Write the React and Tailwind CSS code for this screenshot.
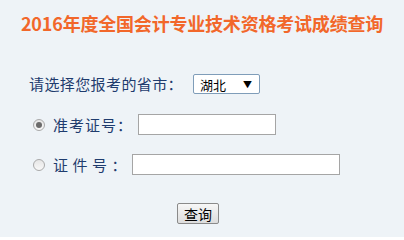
import { useState } from "react"

const Radio = ({ checked }) => (
  <span className="w-[12px] h-[12px] rounded-full border border-[#a9a9a9] bg-gradient-to-b from-[#e6e6e6] to-[#f8f8f8] flex items-center justify-center shrink-0">
    {checked && <span className="w-[6px] h-[6px] rounded-full bg-[#6b6b6b]" />}
  </span>
)

const App = () => {
  const [mode, setMode] = useState("zkz")

  return (
    <div
      className="w-[404px] h-[237px] bg-[#eef3f7] overflow-hidden flex flex-col"
      style={{ fontFamily: '"Noto Sans CJK SC", "Noto Sans", sans-serif' }}
    >
      <h1 className="pt-[13px] h-[33px] text-center text-[18px] leading-[20px] font-bold text-[#f2672a] tracking-[-0.2px] whitespace-nowrap">
        2016年度全国会计专业技术资格考试成绩查询
      </h1>

      {/* province */}
      <div className="mt-[41px] pl-[29px] flex items-center h-[20px]">
        <span className="w-[164px] text-[15px] leading-[20px] text-[#1f3c6e] tracking-[0.4px] whitespace-nowrap">
          请选择您报考的省市：
        </span>
        <div className="w-[67px] h-[20px] border border-[#7f9db9] rounded-[2px] bg-white flex items-center justify-between pl-[6px] pr-[7px]">
          <span className="text-[13px] leading-none text-black">湖北</span>
          <span className="text-[9px] leading-none text-black">▼</span>
        </div>
      </div>

      {/* zkz */}
      <div className="mt-[20px] pl-[33px] flex items-center h-[21px]" onClick={() => setMode("zkz")}>
        <Radio checked={mode === "zkz"} />
        <span className="ml-[8px] w-[85px] text-[15px] leading-[21px] text-[#1f3c6e] tracking-[1px] whitespace-nowrap">准考证号：</span>
        <input className="w-[138px] h-[21px] border border-[#a5a5a5] bg-white outline-none px-1 text-[13px]" />
      </div>

      {/* id */}
      <div className="mt-[19px] pl-[33px] flex items-center h-[21px]" onClick={() => setMode("id")}>
        <Radio checked={mode === "id"} />
        <span className="ml-[8px] w-[79px] shrink-0 text-[15px] leading-[21px] text-[#1f3c6e] tracking-[4.5px] whitespace-nowrap">证件号：</span>
        <input className="w-[208px] h-[21px] border border-[#a5a5a5] bg-white outline-none px-1 text-[13px]" />
      </div>

      <div className="mt-[28px] flex pl-[177px]">
        <button className="w-[42px] h-[21px] border border-[#8a8a8a] rounded-[2px] bg-gradient-to-b from-[#f7f7f7] to-[#dddddd] text-[14px] leading-none text-black">
          查询
        </button>
      </div>
    </div>
  )
}

export default App
